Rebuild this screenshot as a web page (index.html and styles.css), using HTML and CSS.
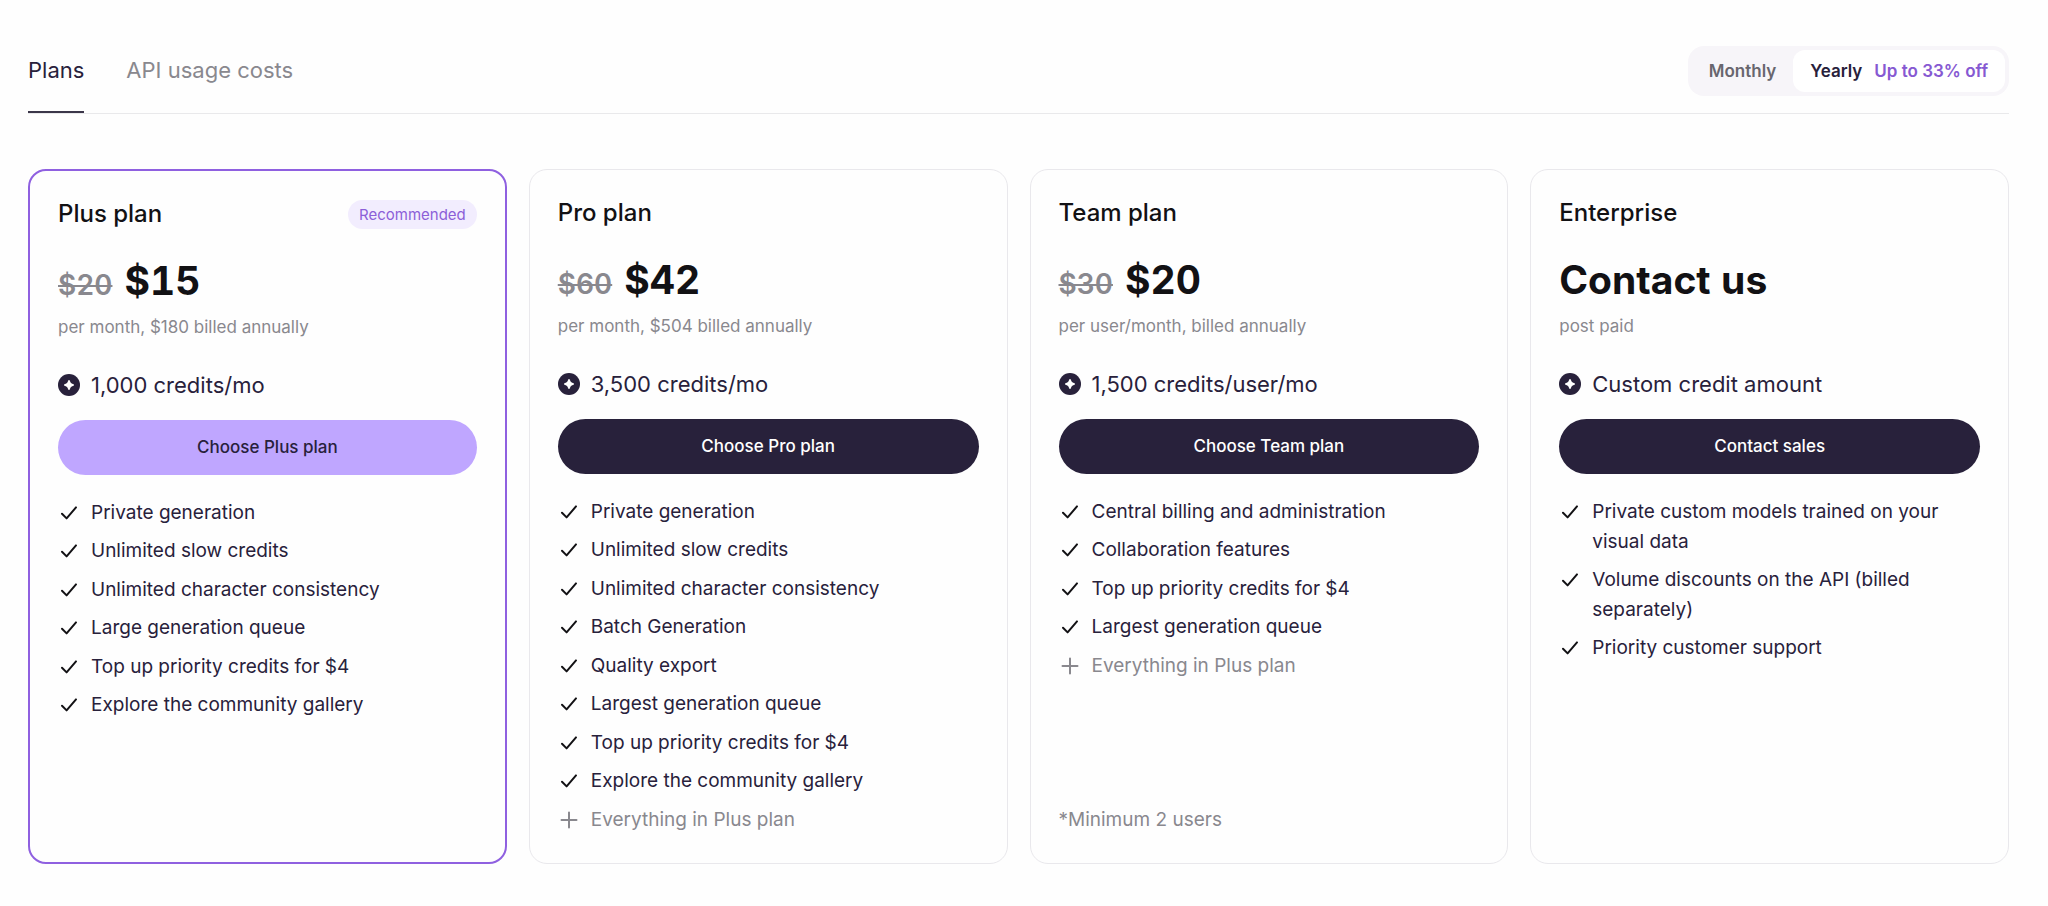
FILE: index.html
```html
<!DOCTYPE html>
<html lang="en">
<head>
  <meta charset="utf-8">
  <meta name="viewport" content="width=device-width, initial-scale=1">
  <title>Plans</title>
  <link rel="stylesheet" href="styles.css">
</head>
<body>

  <!-- icons -->
  <svg class="sprite" aria-hidden="true">
    <symbol id="check" viewBox="0 0 22 22">
      <path d="M4 11.8L8.6 16.4L18 5.4" fill="none" stroke="currentColor" stroke-width="2" stroke-linecap="round" stroke-linejoin="round"/>
    </symbol>
    <symbol id="plus" viewBox="0 0 22 22">
      <path d="M11 3.5V18.5M3.5 11H18.5" fill="none" stroke="currentColor" stroke-width="2" stroke-linecap="round"/>
    </symbol>
    <symbol id="credit" viewBox="0 0 22 22">
      <circle cx="11" cy="11" r="11" fill="currentColor"/>
      <path d="M11 6Q11.8 6 12 7.2Q12.5 9.5 14.8 10Q16 10.2 16 11Q16 11.8 14.8 12Q12.5 12.5 12 14.8Q11.8 16 11 16Q10.2 16 10 14.8Q9.5 12.5 7.2 12Q6 11.8 6 11Q6 10.2 7.2 10Q9.5 9.5 10 7.2Q10.2 6 11 6Z" fill="#fff"/>
    </symbol>
  </svg>

  <header class="topbar">
    <nav class="tabs">
      <a href="#plans" class="tab active">Plans</a>
      <a href="#api" class="tab">API usage costs</a>
    </nav>
    <div class="period">
      <button type="button" class="period-btn">Monthly</button>
      <button type="button" class="period-btn selected">Yearly <span class="discount">Up to 33% off</span></button>
    </div>
  </header>

  <main class="plans" id="plans">

    <section class="card recommended">
      <div class="card-head">
        <h2>Plus plan</h2>
        <span class="badge">Recommended</span>
      </div>
      <div class="price"><s>$20</s><strong>$15</strong></div>
      <p class="billing">per month, $180 billed annually</p>
      <p class="credits"><svg class="icon"><use href="#credit"/></svg>1,000 credits/mo</p>
      <button type="button" class="choose">Choose Plus plan</button>
      <ul class="features">
        <li><svg class="icon"><use href="#check"/></svg><span>Private generation</span></li>
        <li><svg class="icon"><use href="#check"/></svg><span>Unlimited slow credits</span></li>
        <li><svg class="icon"><use href="#check"/></svg><span>Unlimited character consistency</span></li>
        <li><svg class="icon"><use href="#check"/></svg><span>Large generation queue</span></li>
        <li><svg class="icon"><use href="#check"/></svg><span>Top up priority credits for $4</span></li>
        <li><svg class="icon"><use href="#check"/></svg><span>Explore the community gallery</span></li>
      </ul>
    </section>

    <section class="card">
      <div class="card-head">
        <h2>Pro plan</h2>
      </div>
      <div class="price"><s>$60</s><strong>$42</strong></div>
      <p class="billing">per month, $504 billed annually</p>
      <p class="credits"><svg class="icon"><use href="#credit"/></svg>3,500 credits/mo</p>
      <button type="button" class="choose">Choose Pro plan</button>
      <ul class="features">
        <li><svg class="icon"><use href="#check"/></svg><span>Private generation</span></li>
        <li><svg class="icon"><use href="#check"/></svg><span>Unlimited slow credits</span></li>
        <li><svg class="icon"><use href="#check"/></svg><span>Unlimited character consistency</span></li>
        <li><svg class="icon"><use href="#check"/></svg><span>Batch Generation</span></li>
        <li><svg class="icon"><use href="#check"/></svg><span>Quality export</span></li>
        <li><svg class="icon"><use href="#check"/></svg><span>Largest generation queue</span></li>
        <li><svg class="icon"><use href="#check"/></svg><span>Top up priority credits for $4</span></li>
        <li><svg class="icon"><use href="#check"/></svg><span>Explore the community gallery</span></li>
        <li class="more"><svg class="icon"><use href="#plus"/></svg><span>Everything in Plus plan</span></li>
      </ul>
    </section>

    <section class="card">
      <div class="card-head">
        <h2>Team plan</h2>
      </div>
      <div class="price"><s>$30</s><strong>$20</strong></div>
      <p class="billing">per user/month, billed annually</p>
      <p class="credits"><svg class="icon"><use href="#credit"/></svg>1,500 credits/user/mo</p>
      <button type="button" class="choose">Choose Team plan</button>
      <ul class="features">
        <li><svg class="icon"><use href="#check"/></svg><span>Central billing and administration</span></li>
        <li><svg class="icon"><use href="#check"/></svg><span>Collaboration features</span></li>
        <li><svg class="icon"><use href="#check"/></svg><span>Top up priority credits for $4</span></li>
        <li><svg class="icon"><use href="#check"/></svg><span>Largest generation queue</span></li>
        <li class="more"><svg class="icon"><use href="#plus"/></svg><span>Everything in Plus plan</span></li>
      </ul>
      <p class="note">*Minimum 2 users</p>
    </section>

    <section class="card">
      <div class="card-head">
        <h2>Enterprise</h2>
      </div>
      <div class="price"><strong>Contact us</strong></div>
      <p class="billing">post paid</p>
      <p class="credits"><svg class="icon"><use href="#credit"/></svg>Custom credit amount</p>
      <button type="button" class="choose">Contact sales</button>
      <ul class="features">
        <li><svg class="icon"><use href="#check"/></svg><span>Private custom models trained on your visual data</span></li>
        <li><svg class="icon"><use href="#check"/></svg><span>Volume discounts on the API (billed separately)</span></li>
        <li><svg class="icon"><use href="#check"/></svg><span>Priority customer support</span></li>
      </ul>
    </section>

  </main>

</body>
</html>
```
FILE: styles.css
```css
* {
  box-sizing: border-box;
}

body {
  margin: 0;
  padding: 46px 39px 40px 28px;
  background-color: #fefefe;
  color: #28213b;
  font-family: Inter, "Liberation Sans", sans-serif;
  font-size: 19px;
}

h2, p, ul {
  margin: 0;
  padding: 0;
}

button {
  border: none;
  font-family: inherit;
  cursor: pointer;
}

.sprite {
  display: none;
}

.icon {
  width: 22px;
  height: 22px;
  flex-shrink: 0;
}

/* tabs + billing period */
.topbar {
  display: flex;
  justify-content: space-between;
  align-items: flex-start;
  border-bottom: 1px solid #e9e9eb;
}

.tabs {
  display: flex;
  align-self: stretch;
  gap: 42px;
}

.tab {
  padding-top: 9px;
  color: #89888e;
  font-size: 22px;
  line-height: 30px;
  text-decoration: none;
}

.tab.active {
  color: #28213b;
  border-bottom: 2px solid #3b3649;
}

.period {
  display: flex;
  margin-bottom: 17px;
  padding: 4px;
  border-radius: 16px;
  background-color: #f7f5f9;
}

.period-btn {
  display: flex;
  gap: 12px;
  padding: 6px 17px;
  border-radius: 12px;
  background-color: transparent;
  color: #68666e;
  font-size: 17px;
  font-weight: 600;
  line-height: 30px;
}

.period-btn.selected {
  background-color: #fff;
  color: #28213b;
}

.discount {
  color: #8659d2;
}

/* plan cards */
.plans {
  display: grid;
  grid-template-columns: repeat(4, 1fr);
  gap: 22px;
  margin-top: 55px;
}

.card {
  display: flex;
  flex-direction: column;
  padding: 28px;
  border: 1px solid #e9e8ec;
  border-radius: 18px;
}

.card.recommended {
  border: 2px solid #8f60e0;
}

.card-head {
  display: flex;
  justify-content: space-between;
  align-items: center;
  height: 30px;
}

.card-head h2 {
  color: #121114;
  font-size: 24px;
  font-weight: 500;
  line-height: 30px;
}

.badge {
  padding: 0 11px;
  border-radius: 15px;
  background-color: #f2edfe;
  color: #8c5fd8;
  font-size: 15px;
  line-height: 29px;
}

.price {
  display: flex;
  align-items: baseline;
  gap: 12px;
  height: 42px;
  margin-top: 31px;
  font-variant-numeric: tabular-nums;
  line-height: 42px;
}

.price s {
  color: #89888e;
  font-size: 28px;
  font-weight: 600;
  line-height: 30px;
}

.price strong {
  color: #121114;
  font-size: 39px;
  font-weight: 700;
}

.billing {
  margin-top: 11px;
  color: #89888e;
  font-size: 17px;
  line-height: 28px;
}

.credits {
  display: flex;
  align-items: center;
  gap: 11px;
  margin-top: 29px;
  font-size: 22px;
  line-height: 30px;
}

.choose {
  margin-top: 20px;
  padding: 0 20px;
  border-radius: 28px;
  background-color: #28213b;
  color: #fff;
  font-size: 17px;
  font-weight: 500;
  line-height: 55px;
}

.recommended .choose {
  background-color: #bfa6ff;
  color: #28213b;
}

.features {
  display: grid;
  grid-auto-rows: minmax(30px, auto) minmax(31px, auto);
  gap: 8px;
  margin-top: 23px;
  list-style: none;
  line-height: 30px;
}

.features li {
  display: flex;
  gap: 11px;
}

.features .icon {
  margin-top: 4px;
  color: #121114;
}

.features .more,
.features .more .icon,
.note {
  color: #89888e;
}

.note {
  margin-top: auto;
  line-height: 30px;
}
```
